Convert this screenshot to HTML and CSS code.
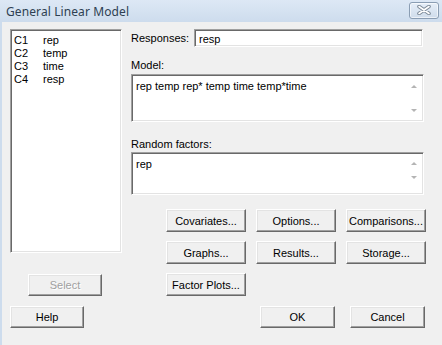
FILE: index.html
```html
<!DOCTYPE html>
<html lang="en">
<head>
  <meta charset="UTF-8" />
  <title>General Linear Model</title>
  <link rel="stylesheet" href="styles.css">
</head>
<body>
  <div class="window">
    <div class="titlebar">
      <span class="title">General Linear Model</span>
      <button class="close-btn">
        <svg width="14" height="10" viewBox="0 0 14 10">
          <path d="M2 1.5 L12 8.5 M12 1.5 L2 8.5" stroke="#7d8a98" stroke-width="3.6" stroke-linecap="round" fill="none"/>
          <path d="M2 1.5 L12 8.5 M12 1.5 L2 8.5" stroke="#ffffff" stroke-width="1.6" stroke-linecap="round" fill="none"/>
        </svg>
      </button>
    </div>
    <div class="dialog">
      <div class="main">
        <div class="left-pane">
          <ul class="var-list sunken">
            <li><span class="col">C1</span>rep</li>
            <li><span class="col">C2</span>temp</li>
            <li><span class="col">C3</span>time</li>
            <li><span class="col">C4</span>resp</li>
          </ul>
          <button class="btn btn-select" disabled>Select</button>
        </div>
        <div class="right-pane">
          <div class="field-row">
            <label>Responses:</label>
            <div class="sunken input-resp">resp</div>
          </div>
          <label class="field-label label-model">Model:</label>
          <div class="sunken text-box model-box">
            <div class="box-text">rep temp rep* temp time temp*time</div>
            <div class="scroll"><span class="arrow-up"></span><span class="arrow-down"></span></div>
          </div>
          <label class="field-label label-random">Random factors:</label>
          <div class="sunken text-box random-box">
            <div class="box-text">rep</div>
            <div class="scroll"><span class="arrow-up"></span><span class="arrow-down"></span></div>
          </div>
          <div class="button-grid">
            <button class="btn">Covariates...</button>
            <button class="btn">Options...</button>
            <button class="btn">Comparisons...</button>
            <button class="btn">Graphs...</button>
            <button class="btn">Results...</button>
            <button class="btn">Storage...</button>
            <button class="btn">Factor Plots...</button>
          </div>
        </div>
      </div>
      <div class="bottom-row">
        <button class="btn btn-wide btn-help">Help</button>
        <button class="btn btn-wide btn-ok">OK</button>
        <button class="btn btn-wide">Cancel</button>
      </div>
    </div>
  </div>
</body>
</html>
```

FILE: styles.css
```css
body {
  margin: 0;
  font-family: "Liberation Sans", Arial, sans-serif;
  font-size: 11px;
  color: #000;
  background: #f0f0f0;
}
.window {
  width: 442px;
  height: 345px;
  background: #f0f0f0;
  overflow: hidden;
}
.titlebar {
  height: 22px;
  display: flex;
  align-items: center;
  justify-content: space-between;
  padding: 0 3px 0 6px;
  background: linear-gradient(#dde8f5, #cddced);
  box-sizing: border-box;
}
.title {
  font-family: "Noto Sans", "Open Sans", sans-serif;
  font-size: 12px;
  color: #2e3f52;
  letter-spacing: 0.1px;
}
.close-btn {
  width: 30px;
  height: 17px;
  margin-top: -2px;
  padding: 0;
  border: 1px solid #8a9db3;
  border-radius: 3px;
  background: linear-gradient(#e6eef8, #cfdceb);
  display: flex;
  align-items: center;
  justify-content: center;
  box-shadow: inset 0 0 0 1px rgba(255, 255, 255, 0.6);
}
.dialog {
  border-left: 2px solid #cddced;
  height: 323px;
  padding: 7px 17px 0 8px;
  box-sizing: border-box;
}
.main {
  display: flex;
  gap: 9px;
}
.sunken {
  background: #fff;
  border: 1px solid;
  border-color: #a0a0a0 #fff #fff #a0a0a0;
  box-shadow: inset 1px 1px #696969, inset -1px -1px #e3e3e3;
  box-sizing: border-box;
}
.left-pane {
  width: 112px;
  display: flex;
  flex-direction: column;
}
.var-list {
  list-style: none;
  margin: 0;
  padding: 4px 3px;
  height: 224px;
}
.var-list li {
  line-height: 13px;
  height: 13px;
}
.col {
  display: inline-block;
  width: 29px;
}
.btn {
  font-family: "Liberation Sans", Arial, sans-serif;
  font-size: 11px;
  color: #000;
  background: #f0f0f0;
  border: 1px solid;
  border-color: #fff #696969 #696969 #fff;
  box-shadow: inset -1px -1px #a0a0a0, inset 1px 1px #e3e3e3;
  padding: 0;
  width: 80px;
  height: 23px;
  box-sizing: border-box;
}
.btn-select {
  width: 74px;
  height: 22px;
  margin: 21px 0 0 18px;
  color: #a0a0a0;
  text-shadow: 1px 1px #fff;
}
.right-pane {
  width: 293px;
  display: flex;
  flex-direction: column;
}
.field-row {
  display: flex;
  align-items: center;
  height: 18px;
}
.field-row label {
  width: 63px;
}
.input-resp {
  width: 229px;
  height: 18px;
  padding: 3px 0 0 4px;
}
.field-label {
  line-height: 13px;
  height: 13px;
}
.label-model {
  margin: 12px 0 2px;
}
.label-random {
  margin: 16px 0 1px;
}
.text-box {
  display: flex;
}
.box-text {
  flex: 1;
  padding: 5px 4px;
}
.model-box {
  height: 48px;
}
.random-box {
  height: 43px;
}
.scroll {
  width: 19px;
  display: flex;
  flex-direction: column;
  justify-content: space-between;
  align-items: center;
}
.model-box .scroll {
  padding: 10px 0 9px;
}
.random-box .scroll {
  padding: 9px 0 15px;
}
.arrow-up,
.arrow-down {
  width: 0;
  height: 0;
  border-left: 3.5px solid transparent;
  border-right: 3.5px solid transparent;
}
.arrow-up {
  border-bottom: 3px solid #b4b4b4;
}
.arrow-down {
  border-top: 3px solid #b4b4b4;
}
.button-grid {
  display: grid;
  grid-template-columns: repeat(3, 80px);
  grid-auto-rows: 23px;
  column-gap: 10px;
  row-gap: 9px;
  margin: 14px 0 0 35px;
}
.bottom-row {
  display: flex;
  margin-top: 10px;
  gap: 15px;
}
.btn-wide {
  width: 75px;
  height: 22px;
}
.btn-help {
  width: 74px;
}
.btn-ok {
  margin-left: auto;
}
```
